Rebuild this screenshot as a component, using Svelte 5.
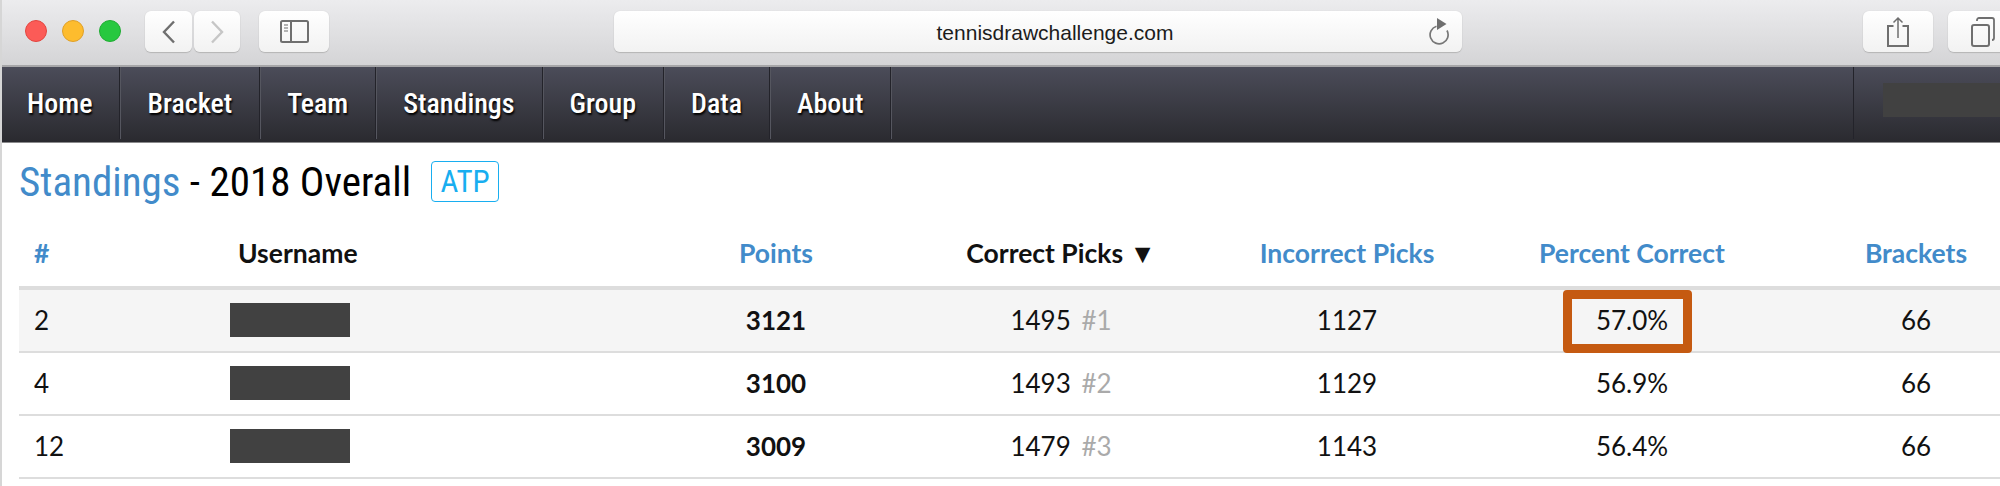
<script>
  const navItems = ['Home', 'Bracket', 'Team', 'Standings', 'Group', 'Data', 'About'];
  const rows = [
    { rank: 2, points: 3121, correct: 1495, pos: '#1', incorrect: 1127, percent: '57.0%', brackets: 66, hit: true },
    { rank: 4, points: 3100, correct: 1493, pos: '#2', incorrect: 1129, percent: '56.9%', brackets: 66 },
    { rank: 12, points: 3009, correct: 1479, pos: '#3', incorrect: 1143, percent: '56.4%', brackets: 66 }
  ];
</script>

<div class="window">
  <header class="toolbar">
    <div class="lights">
      <span class="light red"></span>
      <span class="light yellow"></span>
      <span class="light green"></span>
    </div>
    <div class="nav-buttons">
      <button class="tb back" aria-label="Back">
        <svg width="18" height="26" viewBox="0 0 18 26"><path d="M14 2.5 4 13l10 10.5" fill="none" stroke="#6f6f6f" stroke-width="2.4"/></svg>
      </button>
      <button class="tb forward" aria-label="Forward">
        <svg width="18" height="26" viewBox="0 0 18 26"><path d="M4 2.5 14 13 4 23.5" fill="none" stroke="#c6c6c6" stroke-width="2.4"/></svg>
      </button>
    </div>
    <button class="tb sidebar" aria-label="Sidebar">
      <svg width="29" height="23" viewBox="0 0 29 23">
        <rect x="1" y="1" width="27" height="21" rx="1.5" fill="none" stroke="#6f6f6f" stroke-width="2"/>
        <path d="M11 1v21" stroke="#6f6f6f" stroke-width="2"/>
        <path d="M4 5h4M4 8h4M4 11h4" stroke="#9a9a9a" stroke-width="1.4"/>
      </svg>
    </button>
    <div class="url">
      <span>tennisdrawchallenge.com</span>
      <svg class="reload" width="24" height="28" viewBox="0 0 24 28">
        <path d="M9.500 7.200A9 9 0 1 0 20 11.500" fill="none" stroke="#777" stroke-width="1.700" transform="translate(0 2)"/>
        <path d="M10 1l9.500 6L10 13z" fill="#6f6f6f"/>
      </svg>
    </div>
    <button class="tb share" aria-label="Share">
      <svg width="24" height="32" viewBox="0 0 24 32">
        <path d="M7.500 10H2v20h20V10h-5.500" fill="none" stroke="#6f6f6f" stroke-width="2"/>
        <path d="M12 2v20M7.500 6.500 12 2l4.500 4.500" fill="none" stroke="#6f6f6f" stroke-width="1.500"/>
      </svg>
    </button>
    <button class="tb tabs" aria-label="Tabs">
      <svg width="24" height="30" viewBox="0 0 24 30">
        <rect x="1" y="8" width="17" height="21" rx="2" fill="none" stroke="#6f6f6f" stroke-width="2"/>
        <path d="M6 4V3a2 2 0 0 1 2-2h13a2 2 0 0 1 2 2v18a2 2 0 0 1-2 2" fill="none" stroke="#6f6f6f" stroke-width="1.800"/>
      </svg>
    </button>
  </header>

  <nav class="menu">
    {#each navItems as item}
      <a href="#top">{item}</a>
    {/each}
    <div class="account"><span class="redact-nav"></span></div>
  </nav>

  <main>
    <h1><span class="link">Standings</span> - 2018 Overall <span class="badge">ATP</span></h1>
    <table>
      <colgroup>
        <col class="c-rank" /><col class="c-user" /><col class="c-points" /><col class="c-correct" />
        <col class="c-incorrect" /><col class="c-percent" /><col class="c-brackets" />
      </colgroup>
      <thead>
        <tr>
          <th class="left link">#</th>
          <th class="left user">Username</th>
          <th class="link">Points</th>
          <th>Correct Picks ▼</th>
          <th class="link">Incorrect Picks</th>
          <th class="link">Percent Correct</th>
          <th class="link">Brackets</th>
        </tr>
      </thead>
      <tbody>
        {#each rows as r}
          <tr class:hit={r.hit}>
            <td class="left">{r.rank}</td>
            <td class="left name"><span class="redact"></span></td>
            <td class="strong">{r.points}</td>
            <td>{r.correct} <span class="pos">{r.pos}</span></td>
            <td>{r.incorrect}</td>
            <td class="pct">
              {#if r.hit}<span class="mark"></span>{/if}
              <span class="pct-text">{r.percent}</span>
            </td>
            <td>{r.brackets}</td>
          </tr>
        {/each}
      </tbody>
    </table>
  </main>
</div>

<style>
  :global(body) { margin: 0; background: #fff; overflow: hidden; }
  .window { width: 2000px; height: 486px; overflow: hidden; box-sizing: border-box; border-left: 2px solid #d6d6d6; background: #fff; }

  .toolbar { height: 67px; width: 2000px; box-sizing: border-box; display: flex; align-items: flex-start; padding-top: 11px; background: linear-gradient(#ececee, #d4d4d6); border-bottom: 2px solid #a6a6a8; margin-left: -2px; }
  .toolbar > * { flex: none; }
  .lights { display: flex; gap: 15px; margin: 9px 0 0 25px; }
  .light { width: 22px; height: 22px; border-radius: 50%; box-sizing: border-box; }
  .red { background: #fc5b57; border: 1px solid #e3453f; }
  .yellow { background: #fdbc2e; border: 1px solid #e0a028; }
  .green { background: #27c83f; border: 1px solid #20ad33; }

  .tb { height: 41px; padding: 0; border: 0; border-radius: 6px; background: linear-gradient(#ffffff, #f2f2f2); box-shadow: 0 1px 1px #b5b5b5, 0 0 1px #c4c4c4; display: flex; align-items: center; justify-content: center; }
  .nav-buttons { display: flex; gap: 2px; margin-left: 24px; }
  .back { width: 47px; }
  .forward { width: 46px; }
  .sidebar { width: 70px; margin-left: 19px; }
  .url { width: 848px; height: 41px; margin-left: 285px; padding: 2px 0 0 34px; box-sizing: border-box; border-radius: 6px; background: linear-gradient(#ffffff, #f2f2f2); box-shadow: 0 1px 1px #b5b5b5, 0 0 1px #c4c4c4; position: relative; display: flex; align-items: center; justify-content: center; font: 21px "Liberation Sans", sans-serif; color: #1c1c1c; }
  .reload { position: absolute; right: 11px; top: 6px; }
  .share { width: 70px; margin-left: 401px; }
  .tabs { width: 70px; margin-left: 15px; }

  .menu { height: 76px; box-sizing: border-box; display: flex; background: linear-gradient(#4b4c59, #2a2a2f); border-bottom: 1px solid #8a8a8c; padding-bottom: 3px; }
  .menu a { display: flex; align-items: center; padding: 0 27px; color: #fff; text-decoration: none; font: 500 28px "Roboto", sans-serif; font-stretch: 75%; text-shadow: 1px 2px 2px #000; border-right: 1px solid #23232a; box-shadow: 1px 0 0 #55565f; }
  .menu a:first-child { padding-left: 25px; }
  .account { margin-left: auto; width: 146px; border-left: 1px solid #23232a; position: relative; }
  .redact-nav { position: absolute; left: 29px; right: 0; top: 16px; height: 34px; background: #414141; }

  h1 { margin: 0; padding: 15px 0 0 17px; height: 77px; box-sizing: border-box; font: 400 41px "Roboto", sans-serif; font-stretch: 75%; color: #000; }
  .link { color: #428bca; }
  .badge { display: inline-block; margin-left: 11px; padding: 0 8px; border: 1.500px solid #18aef0; border-radius: 4px; font-size: 31px; line-height: 39px; color: #18aef0; vertical-align: 4px; }

  table { border-collapse: collapse; table-layout: fixed; width: 2033px; margin-left: 17px; font: 26px "Lato", sans-serif; color: #111; }
  .c-rank { width: 201px; } .c-user { width: 420px; } .c-points { width: 272px; } .c-correct { width: 298px; }
  .c-incorrect { width: 274px; } .c-percent { width: 296px; } .c-brackets { width: 272px; }
  th { height: 68px; padding: 0; box-sizing: border-box; font-weight: 700; font-size: 26.500px; text-align: center; border-bottom: 4px solid #ddd; }
  td { height: 59px; padding: 0 0 2px; text-align: center; border-bottom: 2px solid #ddd; }
  .left { text-align: left; padding-left: 15px; }
  th.user { padding-left: 18px; }
  td.name { padding-left: 10px; }
  .hit td { background: #f5f5f5; }
  .strong { font-weight: 700; }
  .pos { color: #aaa; margin-left: 4px; }
  .redact { display: block; width: 120px; height: 34px; background: #414141; }
  .pct { position: relative; }
  .pct-text { position: relative; }
  .mark { position: absolute; left: 79px; top: 0; width: 129px; height: 63px; box-sizing: border-box; border: 9px solid #c55a11; border-radius: 4px; }
</style>
